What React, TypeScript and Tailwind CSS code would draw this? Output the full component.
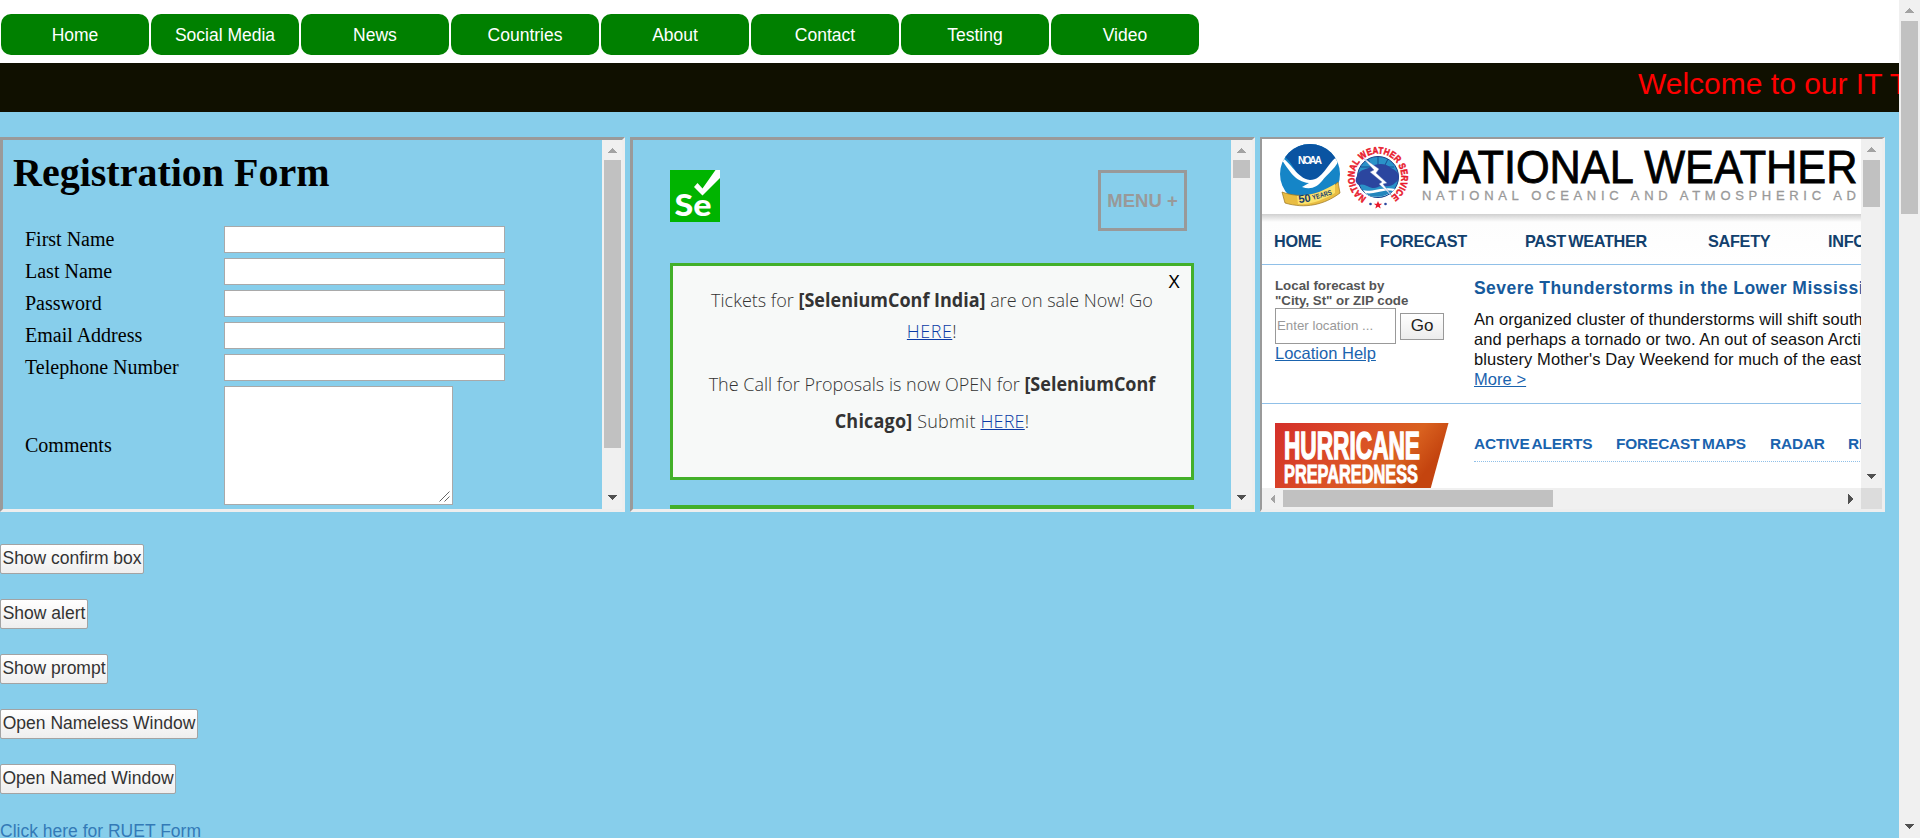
import React from "react";

const SANS = "font-['Liberation_Sans',Arial,sans-serif]";

function Arrow({ dir, dark }: { dir: "up" | "down" | "left" | "right"; dark?: boolean }) {
  const d = {
    up: "M0 6L5 1L10 6Z",
    down: "M0 1H10L5 6Z",
    left: "M6 0V10L1 5Z",
    right: "M1 0V10L6 5Z",
  }[dir];
  const vertical = dir === "up" || dir === "down";
  return (
    <svg
      className="shrink-0"
      width={vertical ? 10 : 7}
      height={vertical ? 7 : 10}
      fill={dark ? "#505050" : "#a3a3a3"}
      shapeRendering="crispEdges"
    >
      <path d={d} />
    </svg>
  );
}

function VScroll({ thumb, width, head = "h-[21px]" }: { thumb: string; width: string; head?: string }) {
  return (
    <div className={`flex shrink-0 flex-col items-center bg-[#f0f0f0] ${width}`}>
      <div className={`flex shrink-0 items-center justify-center pr-px ${head}`}>
        <Arrow dir="up" />
      </div>
      <div className={`w-[17px] bg-[#c1c1c1] ${thumb}`} />
      <div className="mt-auto flex h-[21px] shrink-0 items-center justify-center pr-px pb-[2px]">
        <Arrow dir="down" dark />
      </div>
    </div>
  );
}

function Frame({ children, border }: { children: React.ReactNode; border: string }) {
  return (
    <div
      className={`flex h-[375px] w-[625px] shrink-0 overflow-hidden border-t-[#9a9a9a] border-r-[#eeeeee] border-b-[#eeeeee] border-l-[#9a9a9a] ${border}`}
    >
      {children}
    </div>
  );
}

const NAV = ["Home", "Social Media", "News", "Countries", "About", "Contact", "Testing", "Video"];
const FIELDS = ["First Name", "Last Name", "Password", "Email Address", "Telephone Number"];
const BUTTONS = [
  { label: "Show confirm box", w: "w-[144px]" },
  { label: "Show alert", w: "w-[88px]" },
  { label: "Show prompt", w: "w-[108px]" },
  { label: "Open Nameless Window", w: "w-[198px]" },
  { label: "Open Named Window", w: "w-[176px]" },
];

function Registration() {
  return (
    <Frame border="border-[3px]">
      <div className="min-w-0 flex-1 overflow-hidden pl-[10px] font-['Liberation_Serif','Times_New_Roman',serif] text-[20px] text-black">
        <h1 className="mt-[10px] h-[46px] text-[40px] leading-[46px] font-bold">Registration Form</h1>
        <div className="mt-[30px] flex flex-col gap-[5px] pl-[12px]">
          {FIELDS.map((f) => (
            <label key={f} className="flex h-[27px] items-center">
              <span className="w-[199px] pb-px">{f}</span>
              <input className="h-[27px] w-[281px] border border-[#a9a9a9] bg-white" />
            </label>
          ))}
          <label className="flex h-[119px] items-center">
            <span className="w-[199px] pb-px">Comments</span>
            <span className="flex h-[119px] w-[229px] items-end justify-end border border-[#a9a9a9] bg-white p-[2px]">
              <svg width="11" height="11" stroke="#666" strokeWidth="1" fill="none">
                <path d="M.5 10.5L10.5 .5M5.5 10.5L10.5 5.5" />
              </svg>
            </span>
          </label>
        </div>
      </div>
      <VScroll width="w-[20px]" head="h-[20px]" thumb="h-[288px]" />
    </Frame>
  );
}

function Selenium() {
  return (
    <Frame border="border-[3px]">
      <div className={`min-w-0 flex-1 overflow-hidden pl-[37px] ${SANS}`}>
        <div className="mt-[30px] flex h-[93px] w-[517px] items-start justify-between">
          <svg width="50" height="52" viewBox="0 0 50 52">
            <rect width="50" height="52" fill="#00b400" />
            <path d="M24 17l3.5-4 5 5.5L45.5 0H50v8L32.500 25.500Z" fill="#fff" />
            <text x="4.500" y="46" fontFamily="Lato, sans-serif" fontWeight="900" fontSize="30" textLength="37" lengthAdjust="spacingAndGlyphs" fill="#fff">
              Se
            </text>
          </svg>
          <div className="flex h-[61px] w-[89px] items-center justify-center border-[3px] border-[#999] text-[18.5px] font-bold whitespace-nowrap text-[#999]">
            MENU +
          </div>
        </div>
        <div className="relative h-[217px] w-[524px] border-[3px] border-[#43b02a] bg-[#f7f9f8] text-center font-['Open_Sans','Noto_Sans',sans-serif] text-[18.75px] font-light whitespace-nowrap text-[#333]">
          <span className="absolute top-[3px] right-[11px] font-['Liberation_Sans',sans-serif] text-[17.5px] text-black">X</span>
          <div className="flex origin-center scale-x-[.96] flex-col items-center">
            <p className="mt-[18px] h-[31px] leading-[31px]">
              Tickets for <b className="font-bold">[SeleniumConf India]</b> are on sale Now! Go
            </p>
            <p className="h-[31px] leading-[31px] tracking-[0.5px]">
              <a className="text-[#0a3aa5] underline">HERE</a>!
            </p>
            <p className="mt-[19px] h-[37px] leading-[37px]">
              The Call for Proposals is now OPEN for <b className="font-bold">[SeleniumConf</b>
            </p>
            <p className="h-[37px] leading-[37px] tracking-[0.2px]">
              <b className="font-bold">Chicago]</b> Submit <a className="text-[#0a3aa5] underline">HERE</a>!
            </p>
          </div>
        </div>
        <div className="mt-[25px] h-[30px] w-[524px] bg-[#43b02a]" />
      </div>
      <VScroll width="w-[21px]" head="h-[20px]" thumb="h-[18px]" />
    </Frame>
  );
}

function Masthead() {
  return (
    <svg className="block shrink-0" width="599" height="75" viewBox="0 0 599 75" fontFamily="Liberation Sans, Arial, sans-serif">
      <clipPath id="noaa">
        <circle cx="48" cy="35" r="30" />
      </clipPath>
      <g clipPath="url(#noaa)">
        <rect x="18" y="5" width="60" height="60" fill="#1585c7" />
        <path d="M18 5H78V18C70 24 60 42 48 42C36 42 32 25 23 18Z" fill="#0a54a2" />
        <path d="M17 17C29 22 34 39 48 41C61 41 65 24 76 17C80 24 66 34 60 42C55 48 49 51 40 48L47 44C32 42 28 32 17 17Z" fill="#fff" />
      </g>
      <text x="48" y="25" textAnchor="middle" fontSize="10" fontWeight="bold" fill="#fff" textLength="24">NOAA</text>
      <path d="M20 53C39 60 62 56 76 43L78 54C62 66 43 70 23 64Z" fill="#e9bd43" stroke="#9a7420" strokeWidth=".7" />
      <path d="M35 57C52 57 64 50 73 45L73 54C61 61 49 66 36 65Z" fill="#fbe26c" />
      <text transform="translate(37 64) rotate(-8)" fontSize="11" fontWeight="bold" fill="#173d6d">50</text>
      <text transform="translate(51 61) rotate(-16)" fontSize="7" fontWeight="bold" fill="#173d6d" textLength="20" lengthAdjust="spacingAndGlyphs">YEARS</text>

      <circle cx="116" cy="38" r="20.500" fill="#2a92c8" stroke="#183e88" strokeWidth="1" />
      <path d="M99 28L132 28M106 20L111 30M116 18V29M126 20L121 30" stroke="#174e91" strokeWidth="1" fill="none" />
      <path d="M95 37C98 29 105 31 108 28C115 24 124 24 129 29C138 32 139 41 133 44C128 50 120 45 116 48C108 52 104 43 97 46C93 44 93 40 95 37Z" fill="#2b469f" />
      <path d="M101 51C108 54 122 47 133 50C127 57 113 61 104 55Z" fill="#fff" />
      <path d="M104 54C110 56 122 50 131 52C125 57 113 60 106 56Z" fill="#2386bd" />
      <path d="M100 18L117 30L114 34L125 44L121 45L130 57L117 45L120 43L108 33L112 31Z" fill="#fff" stroke="#6d84be" strokeWidth=".4" />
      <path id="ring" d="M104.400 58.500A23.500 23.500 0 1 1 127.600 58.500" fill="none" />
      <text fontSize="9.500" fontWeight="bold" fill="#e8192c" stroke="#e8192c" strokeWidth=".5">
        <textPath href="#ring" textLength="121" lengthAdjust="spacingAndGlyphs">NATIONAL WEATHER SERVICE</textPath>
      </text>
      <path d="M116 62l1.200 2.800h3l-2.400 1.800.9 2.900-2.700-1.700-2.700 1.700.9-2.900-2.400-1.800h3z" fill="#e8192c" />
      <circle cx="108.500" cy="65" r="1.300" fill="#2b469f" />
      <circle cx="123.500" cy="65" r="1.300" fill="#2b469f" />

      <text x="158.500" y="44" fontSize="46" fill="#000" stroke="#000" strokeWidth=".8" textLength="437" lengthAdjust="spacingAndGlyphs">NATIONAL WEATHER</text>
      <text x="160" y="60.500" fontSize="13" fill="#999" stroke="#999" strokeWidth=".3" textLength="434" lengthAdjust="spacing">NATIONAL OCEANIC AND ATMOSPHERIC AD</text>
    </svg>
  );
}

function Weather() {
  return (
    <Frame border="border-2 border-r-[3px] border-b-[3px]">
      <div className={`flex min-w-0 flex-1 flex-col bg-white ${SANS}`}>
        <div className="flex h-[349px] w-[599px] flex-col overflow-hidden whitespace-nowrap">
          <Masthead />
          <div className="h-[51px] shrink-0 border-b border-[#90c0e8] bg-linear-to-b from-[#d0d0d0] via-[#fdfdfd] via-[16%] to-white">
            <nav className="flex h-[50px] items-center pt-[5px] pl-[12px] text-[16.25px] font-bold tracking-[-0.3px] [word-spacing:-2px] text-[#12406d]">
              <span className="w-[106px] shrink-0">HOME</span>
              <span className="w-[145px] shrink-0">FORECAST</span>
              <span className="w-[183px] shrink-0">PAST WEATHER</span>
              <span className="w-[120px] shrink-0">SAFETY</span>
              <span className="shrink-0">INFORMATION</span>
            </nav>
          </div>
          <div className="flex h-[139px] shrink-0 border-b border-[#90c0e8] pl-[13px]">
            <div className="w-[199px] shrink-0 pt-[13px]">
              <p className="text-[13.3px] leading-[15px] font-bold text-[#555]">
                Local forecast by
                <br />
                "City, St" or ZIP code
              </p>
              <div className="flex items-center gap-[4px]">
                <span className="flex h-[36px] w-[121px] items-center border border-[#999] pl-px text-[13.3px] text-[#999]">
                  Enter location ...
                </span>
                <span className="flex h-[27px] w-[44px] items-center justify-center border border-[#999] bg-linear-to-b from-white to-[#ececec] text-[17px] text-[#222]">
                  Go
                </span>
              </div>
              <a className="block text-[16.5px] leading-[19px] text-[#1a63ae] underline">Location Help</a>
            </div>
            <div className="pt-[11px] text-[16.5px] leading-[20px] tracking-[0.05px] text-[#111]">
              <h2 className="h-[33px] text-[17.5px] leading-[24px] font-bold tracking-[0.44px] text-[#165a9c]">
                Severe Thunderstorms in the Lower Mississippi Valley
              </h2>
              <p>An organized cluster of thunderstorms will shift southeast</p>
              <p>and perhaps a tornado or two. An out of season Arctic</p>
              <p className="tracking-[0.08px]">blustery Mother's Day Weekend for much of the eastern</p>
              <a className="text-[#1a63ae] underline">More &gt;</a>
            </div>
          </div>
          <div className="flex shrink-0 pt-[19px] pl-[13px]">
            <svg className="shrink-0" width="199" height="66" viewBox="0 0 199 66" fontFamily="Liberation Sans Narrow, Liberation Sans, sans-serif" fontWeight="bold" fill="#fff">
              <linearGradient id="heat" x1="0" y1="0" x2="1" y2="0.300">
                <stop offset="0" stopColor="#d42f2a" />
                <stop offset="0.500" stopColor="#db4f26" />
                <stop offset="0.800" stopColor="#d9611f" />
                <stop offset="1" stopColor="#c4440f" />
              </linearGradient>
              <path d="M0 0H173.500L155.500 66H0Z" fill="url(#heat)" />
              <text transform="translate(9 35.500) scale(1 1.250)" fontSize="31" textLength="136" lengthAdjust="spacingAndGlyphs" stroke="#fff" strokeWidth="1.200">HURRICANE</text>
              <text transform="translate(9 60) scale(1 1.200)" fontSize="22" textLength="134" lengthAdjust="spacingAndGlyphs" stroke="#fff" strokeWidth=".8">PREPAREDNESS</text>
            </svg>
            <div className="mt-[10px] flex h-[29px] w-[700px] shrink-0 border-b border-dotted border-[#90c0e8] text-[15.4px] leading-[21px] font-bold tracking-[-0.15px] [word-spacing:-1.5px] text-[#1a63ae]">
              <span className="w-[142px] shrink-0">ACTIVE ALERTS</span>
              <span className="w-[154px] shrink-0">FORECAST MAPS</span>
              <span className="w-[78px] shrink-0">RADAR</span>
              <span>RIVERS</span>
            </div>
          </div>
        </div>
        <div className="flex h-[21px] items-center bg-[#f0f0f0]">
          <div className="flex w-[21px] shrink-0 justify-center">
            <Arrow dir="left" />
          </div>
          <div className="h-[17px] w-[270px] bg-[#c1c1c1]" />
          <div className="ml-auto flex w-[21px] justify-center">
            <Arrow dir="right" dark />
          </div>
        </div>
      </div>
      <div className="flex w-[21px] shrink-0 flex-col">
        <div className="flex h-[349px] justify-center bg-[#f0f0f0]">
          <VScroll width="w-[21px]" thumb="h-[47px]" />
        </div>
        <div className="h-[21px] bg-[#dcdcdc]" />
      </div>
    </Frame>
  );
}

export default function App() {
  return (
    <div className={`flex h-[838px] w-[1920px] overflow-hidden bg-[#87ceeb] text-[17.5px] ${SANS}`}>
      <main className="w-[1899px] shrink-0 overflow-hidden">
        <nav className="flex h-[63px] gap-[2px] bg-white pt-[14px] pl-px">
          {NAV.map((n) => (
            <a key={n} className="flex h-[41px] w-[148px] items-center justify-center rounded-[10px] bg-[#008000] pt-[2px] text-white">
              {n}
            </a>
          ))}
        </nav>
        <div className="h-[49px] overflow-hidden bg-[#101000] pl-[1638px] text-[30px] leading-[41px] whitespace-nowrap text-[#f00]">
          Welcome to our IT Training
        </div>
        <section className="mt-[25px] flex gap-[5px]">
          <Registration />
          <Selenium />
          <Weather />
        </section>
        <div className="mt-[32px] flex flex-col items-start gap-[25px] text-[#333]">
          {BUTTONS.map((b) => (
            <button
              key={b.label}
              className={`h-[30px] rounded-[2px] border border-[#a3a3a3] bg-linear-to-b from-white to-[#eeeeee] pb-[2px] text-center whitespace-nowrap ${b.w}`}
            >
              {b.label}
            </button>
          ))}
          <a className="leading-[25px] text-[#337ab7]">Click here for RUET Form</a>
        </div>
      </main>
      <VScroll width="w-[21px]" thumb="h-[193px]" />
    </div>
  );
}
